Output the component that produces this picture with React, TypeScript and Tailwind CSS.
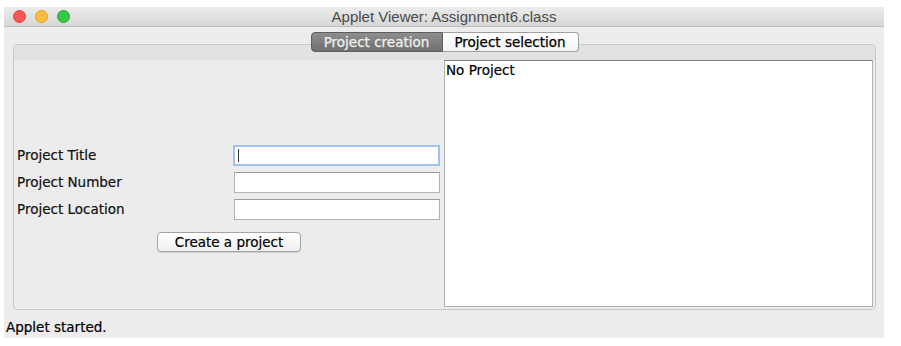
import React from "react";

const ui = { fontFamily: '"DejaVu Sans", "Noto Sans", sans-serif' };

function Field({ focused = false }: { focused?: boolean }) {
  return (
    <div
      className={
        focused
          ? "h-[21px] w-[207px] bg-white border-2 border-[#9fc3ec] flex items-center pl-[3px]"
          : "h-[21px] w-[206px] ml-[1px] bg-white border border-[#b3b3b3] border-t-[#999999]"
      }
    >
      {focused && <div className="w-[1px] h-[13px] bg-[#333333]" />}
    </div>
  );
}

export default function App() {
  return (
    <div className="w-[901px] h-[346px] bg-white pl-[4px] pt-[7px] overflow-hidden">
      <div className="w-[880px] h-[331px] bg-[#ececec] flex flex-col overflow-hidden">
        {/* Title bar */}
        <div className="h-[20px] grid grid-cols-[1fr_auto_1fr] items-center bg-gradient-to-b from-[#ececec] to-[#d6d6d6] border-b border-[#bdbdbd]">
          <div className="flex items-center gap-[9px] pl-[9px]">
            <div className="w-[13px] h-[13px] rounded-full bg-[#fc5753] border border-[#e0443e]" />
            <div className="w-[13px] h-[13px] rounded-full bg-[#fdbc40] border border-[#dea123]" />
            <div className="w-[13px] h-[13px] rounded-full bg-[#34c84a] border border-[#27aa35]" />
          </div>
          <div
            className="text-[15px] leading-[18px] text-[#4a4a4a]"
            style={{ fontFamily: '"Liberation Sans", Arial, sans-serif' }}
          >
            Applet Viewer: Assignment6.class
          </div>
          <div />
        </div>

        {/* Tabs */}
        <div className="pl-[9px] mt-[5px] relative z-10">
          <div className="w-[863px] h-[20px] flex justify-center [-webkit-text-stroke:0.25px]" style={ui}>
            <div className="w-[132px] h-[20px] flex items-center justify-center rounded-l-[4px] border border-[#5e5e5e] bg-gradient-to-b from-[#8e8e8e] to-[#6f6f6f] text-[13.5px] text-[#f0f0f0]">
              Project creation
            </div>
            <div className="w-[136px] h-[20px] flex items-center justify-center rounded-r-[4px] border border-l-0 border-[#a0a0a0] bg-gradient-to-b from-white to-[#f4f4f4] text-[13.5px] text-black">
              Project selection
            </div>
          </div>
        </div>

        {/* Tab panel */}
        <div className="pl-[9px] -mt-[8px]">
          <div className="w-[863px] h-[266px] border border-[#c8c8c8] rounded-[4px] flex flex-col overflow-hidden [-webkit-text-stroke:0.2px]" style={ui}>
            <div className="h-[15px] bg-[#e2e2e2]" />
            <div className="flex-1 flex pr-[2px] pb-[2px]">
              <div className="w-[430px] flex flex-col pt-[85px]">
                <div className="grid grid-cols-[219px_207px] gap-y-[6px] items-center text-[13.5px] text-[#111111]">
                  <div className="pl-[3px] leading-[21px]">Project Title</div>
                  <Field focused />
                  <div className="pl-[3px] leading-[21px]">Project Number</div>
                  <Field />
                  <div className="pl-[3px] leading-[21px]">Project Location</div>
                  <Field />
                </div>
                <div className="flex justify-center mt-[12px]">
                  <div className="w-[144px] h-[20px] flex items-center justify-center rounded-[4px] border border-[#a3a3a3] bg-gradient-to-b from-white to-[#f0f0f0] text-[13.5px] text-black shadow-[0_1px_0_#d0d0d0]">
                    Create a project
                  </div>
                </div>
              </div>
              <div className="flex-1 bg-white border border-[#b0b0b0] border-t-[#808080] pl-[1px] pt-[1px] text-[13.5px] leading-[16px] text-black">
                No Project
              </div>
            </div>
          </div>
        </div>

        {/* Status */}
        <div className="pl-[2px] mt-[9px] text-[13.5px] leading-[16px] text-black [-webkit-text-stroke:0.2px]" style={ui}>
          Applet started.
        </div>
      </div>
    </div>
  );
}
